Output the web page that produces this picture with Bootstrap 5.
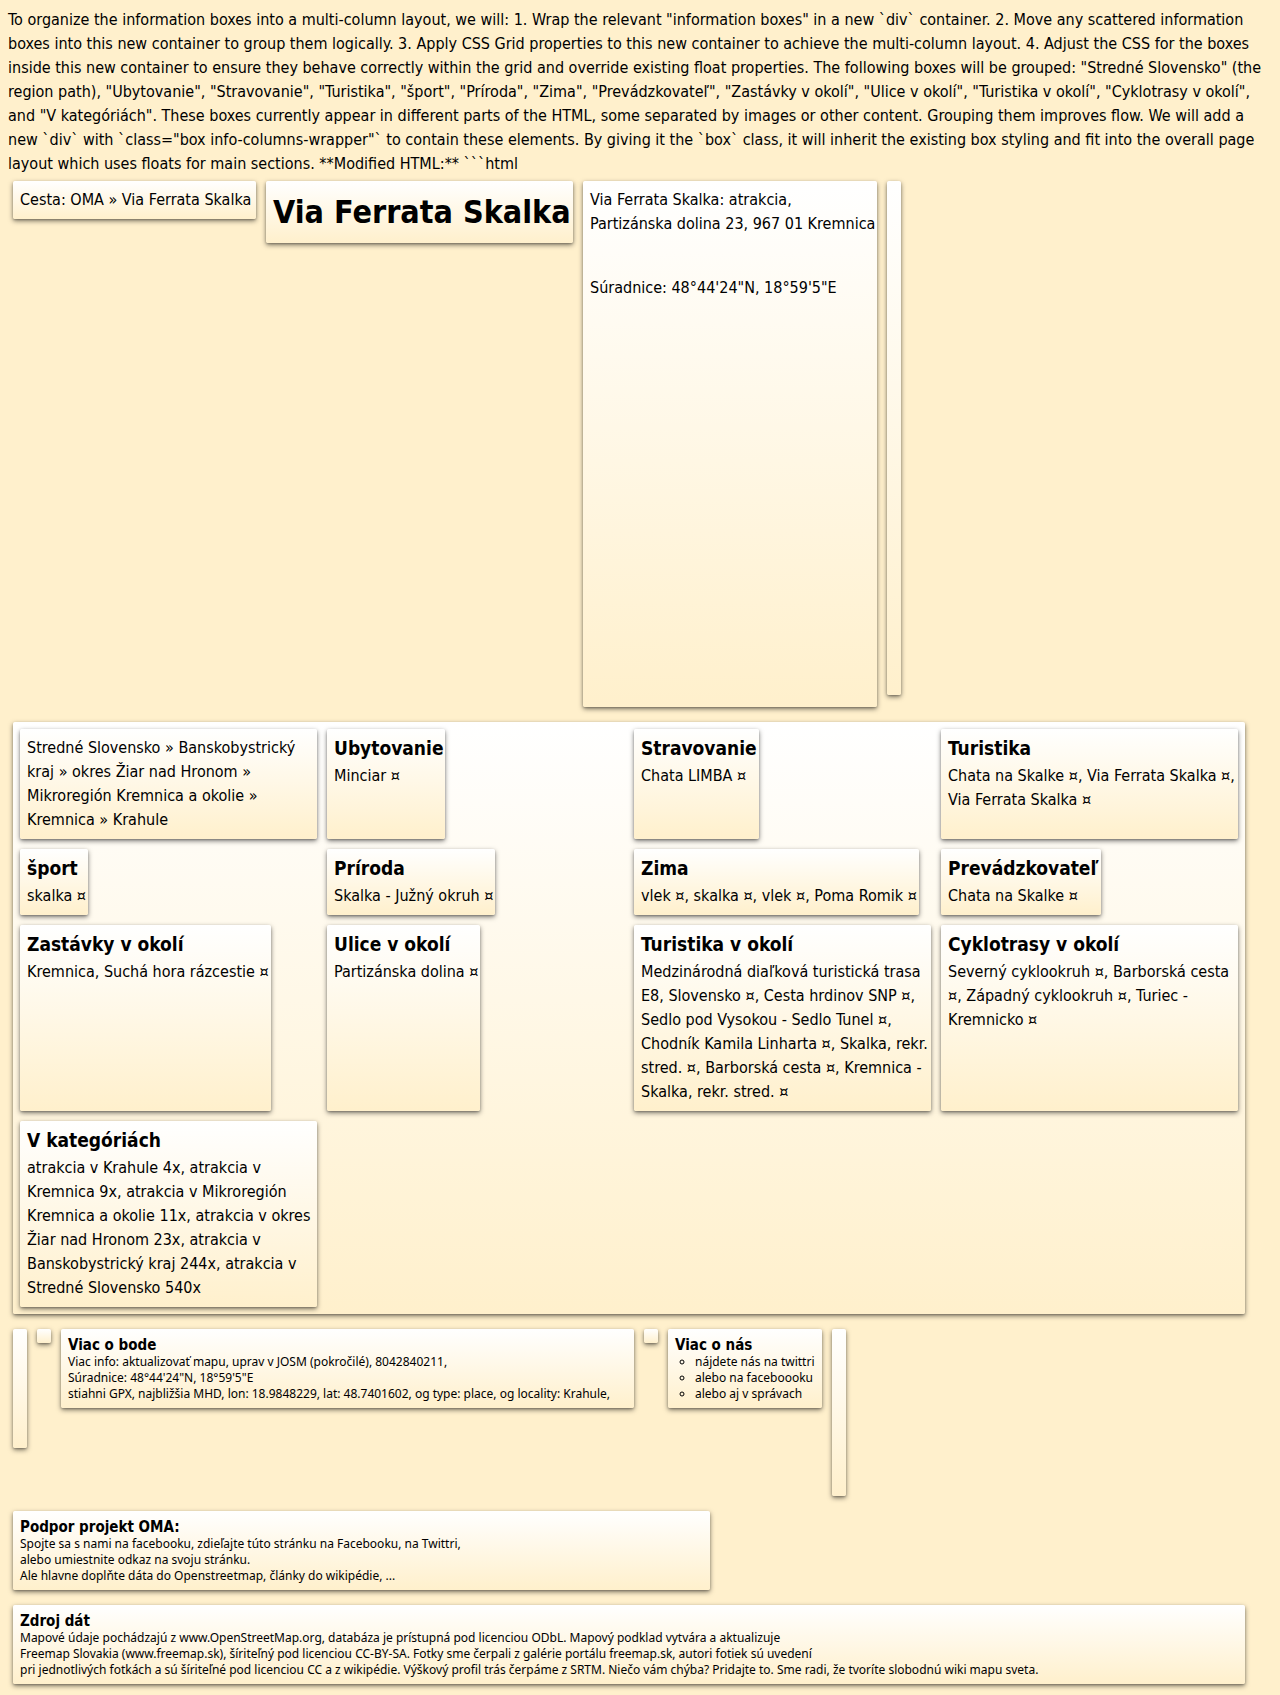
<!DOCTYPE html>
<html lang="sk">
<head>
<meta charset="utf-8">
<meta name="viewport" content="width=device-width, initial-scale=1">
<title>Via Ferrata Skalka</title>
<link href="https://cdn.jsdelivr.net/npm/bootstrap@5.3.0/dist/css/bootstrap.min.css" rel="stylesheet">
<script src="https://cdn.jsdelivr.net/npm/bootstrap@5.3.0/dist/js/bootstrap.bundle.min.js"></script>
<style>
body { background: #fff0cc; color: #000; font: 16px/24px "DejaVu Sans Condensed", "DejaVu Sans", sans-serif; padding: 8px; }
a { color: inherit; text-decoration: none; }
h1, h2, h3 { margin: 0; font-weight: 700; }
h1 { font-size: 32px; line-height: 48px; }
h2 { font-size: 19px; line-height: 24px; margin-bottom: 4px; }
h3 { font-size: 15px; line-height: 18px; }
main { gap: 15px; margin: 5px; max-width: 1232px; }
.strip { gap: 10px; }
.info-box { background: linear-gradient(#fff, #fff0cc); border-radius: 2px; box-shadow: 0 1px 2px rgba(0, 0, 0, .2), 0 2px 5px rgba(0, 0, 0, .5); padding: 7px 2px 7px 7px; min-width: 14px; }
.info-grid { display: grid; grid-template-columns: repeat(4, minmax(0, 1fr)); gap: 10px; padding: 7px; }
.info-grid .info-box { justify-self: start; max-width: 100%; }
.path-box { min-width: 243px; }
.title-box { min-width: 307px; }
.place-box { min-width: 292px; }
.map-slot { height: 424px; margin-top: 40px; }
.slot-tall { height: 514px; }
.slot-ad { height: 119px; }
.slot-share { height: 167px; }
.slot-dot { height: 14px; }
.fine-print { font: 12px/16px "Noto Sans", sans-serif; padding-bottom: 6px; }
.fine-print h3 { font-family: "DejaVu Sans Condensed", sans-serif; }
.fine-print ul { list-style: circle; padding-left: 20px; }
.point-box { min-width: 573px; }
.about-box { min-width: 154px; }
.support-box { width: 697px; max-width: 100%; }
</style>
</head>
<body>
<p class="mb-0">To organize the information boxes into a multi-column layout, we will: 1. Wrap the relevant "information boxes" in a new `div` container. 2. Move any scattered information boxes into this new container to group them logically. 3. Apply CSS Grid properties to this new container to achieve the multi-column layout. 4. Adjust the CSS for the boxes inside this new container to ensure they behave correctly within the grid and override existing float properties. The following boxes will be grouped: "Stredné Slovensko" (the region path), "Ubytovanie", "Stravovanie", "Turistika", "šport", "Príroda", "Zima", "Prevádzkovateľ", "Zastávky v okolí", "Ulice v okolí", "Turistika v okolí", "Cyklotrasy v okolí", and "V kategóriách". These boxes currently appear in different parts of the HTML, some separated by images or other content. Grouping them improves flow. We will add a new `div` with `class="box info-columns-wrapper"` to contain these elements. By giving it the `box` class, it will inherit the existing box styling and fit into the overall page layout which uses floats for main sections. **Modified HTML:** ```html</p>

<main class="d-flex flex-column align-items-start">
  <div class="strip d-flex flex-wrap align-items-start">
    <nav class="info-box path-box">Cesta: <a href="#">OMA</a> » <a href="#">Via Ferrata Skalka</a></nav>
    <div class="info-box title-box"><h1>Via Ferrata Skalka</h1></div>
    <div class="info-box place-box">
      Via Ferrata Skalka: atrakcia,<br>Partizánska dolina 23, 967 01 Kremnica
      <div class="map-slot">Súradnice: 48°44'24"N, 18°59'5"E</div>
    </div>
    <div class="info-box slot-tall"></div>
  </div>

  <div class="info-box info-grid w-100">
    <nav class="info-box"><a href="#">Stredné Slovensko</a> » <a href="#">Banskobystrický kraj</a> » <a href="#">okres Žiar nad Hronom</a> » <a href="#">Mikroregión Kremnica a okolie</a> » <a href="#">Kremnica</a> » <a href="#">Krahule</a></nav>
    <section class="info-box"><h2>Ubytovanie</h2><a href="#">Minciar</a> ¤</section>
    <section class="info-box"><h2>Stravovanie</h2><a href="#">Chata LIMBA</a> ¤</section>
    <section class="info-box"><h2>Turistika</h2><a href="#">Chata na Skalke</a> ¤, <a href="#">Via Ferrata Skalka</a> ¤, <a href="#">Via Ferrata Skalka</a> ¤</section>
    <section class="info-box"><h2>šport</h2><a href="#">skalka</a> ¤</section>
    <section class="info-box"><h2>Príroda</h2><a href="#">Skalka - Južný okruh</a> ¤</section>
    <section class="info-box"><h2>Zima</h2><a href="#">vlek</a> ¤, <a href="#">skalka</a> ¤, <a href="#">vlek</a> ¤, <a href="#">Poma Romik</a> ¤</section>
    <section class="info-box"><h2>Prevádzkovateľ</h2><a href="#">Chata na Skalke</a> ¤</section>
    <section class="info-box"><h2>Zastávky v okolí</h2><a href="#">Kremnica, Suchá hora rázcestie</a> ¤</section>
    <section class="info-box"><h2>Ulice v okolí</h2><a href="#">Partizánska dolina</a> ¤</section>
    <section class="info-box"><h2>Turistika v okolí</h2><a href="#">Medzinárodná diaľková turistická trasa E8, Slovensko</a> ¤, <a href="#">Cesta hrdinov SNP</a> ¤, <a href="#">Sedlo pod Vysokou - Sedlo Tunel</a> ¤, <a href="#">Chodník Kamila Linharta</a> ¤, <a href="#">Skalka, rekr. stred.</a> ¤, <a href="#">Barborská cesta</a> ¤, <a href="#">Kremnica - Skalka, rekr. stred.</a> ¤</section>
    <section class="info-box"><h2>Cyklotrasy v okolí</h2><a href="#">Severný cyklookruh</a> ¤, <a href="#">Barborská cesta</a> ¤, <a href="#">Západný cyklookruh</a> ¤, <a href="#">Turiec - Kremnicko</a> ¤</section>
    <section class="info-box"><h2>V kategóriách</h2><a href="#">atrakcia v Krahule 4x</a>, <a href="#">atrakcia v Kremnica 9x</a>, <a href="#">atrakcia v Mikroregión Kremnica a okolie 11x</a>, <a href="#">atrakcia v okres Žiar nad Hronom 23x</a>, <a href="#">atrakcia v Banskobystrický kraj 244x</a>, <a href="#">atrakcia v Stredné Slovensko 540x</a></section>
  </div>

  <div class="strip d-flex flex-wrap align-items-start">
    <div class="info-box slot-ad"></div>
    <div class="info-box slot-dot"></div>
    <section class="info-box fine-print point-box">
      <h3>Viac o bode</h3>
      Viac info: <a href="#">aktualizovať mapu</a>, <a href="#">uprav v JOSM (pokročilé)</a>, <a href="#">8042840211</a>,<br>
      Súradnice: 48°44'24"N, 18°59'5"E<br>
      <a href="#">stiahni GPX</a>, <a href="#">najbližšia MHD</a>, lon: 18.9848229, lat: 48.7401602, og type: place, og locality: Krahule,
    </section>
    <div class="info-box slot-dot"></div>
    <section class="info-box fine-print about-box">
      <h3>Viac o nás</h3>
      <ul class="mb-0">
        <li><a href="#">nájdete nás na twittri</a></li>
        <li><a href="#">alebo na faceboooku</a></li>
        <li><a href="#">alebo aj v správach</a></li>
      </ul>
    </section>
    <div class="info-box slot-share"></div>
  </div>

  <section class="info-box fine-print support-box">
    <h3>Podpor projekt OMA:</h3>
    Spojte sa s nami <a href="#">na facebooku</a>, zdieľajte túto stránku <a href="#">na Facebooku</a>, <a href="#">na Twittri</a>,<br>
    alebo umiestnite odkaz na svoju stránku.<br>
    Ale hlavne doplňte dáta do <a href="#">Openstreetmap</a>, články do <a href="#">wikipédie</a>, ...
  </section>

  <section class="info-box fine-print w-100">
    <h3>Zdroj dát</h3>
    Mapové údaje pochádzajú z <a href="#">www.OpenStreetMap.org</a>, databáza je prístupná pod licenciou ODbL. Mapový podklad vytvára a aktualizuje<br>
    Freemap Slovakia (<a href="#">www.freemap.sk</a>), šíriteľný pod licenciou CC-BY-SA. Fotky sme čerpali z galérie portálu freemap.sk, autori fotiek sú uvedení<br>
    pri jednotlivých fotkách a sú šíriteľné pod licenciou CC a z wikipédie. Výškový profil trás čerpáme z SRTM. Niečo vám chýba? <a href="#">Pridajte to</a>. Sme radi, že tvoríte slobodnú wiki mapu sveta.
  </section>
</main>
</body>
</html>
